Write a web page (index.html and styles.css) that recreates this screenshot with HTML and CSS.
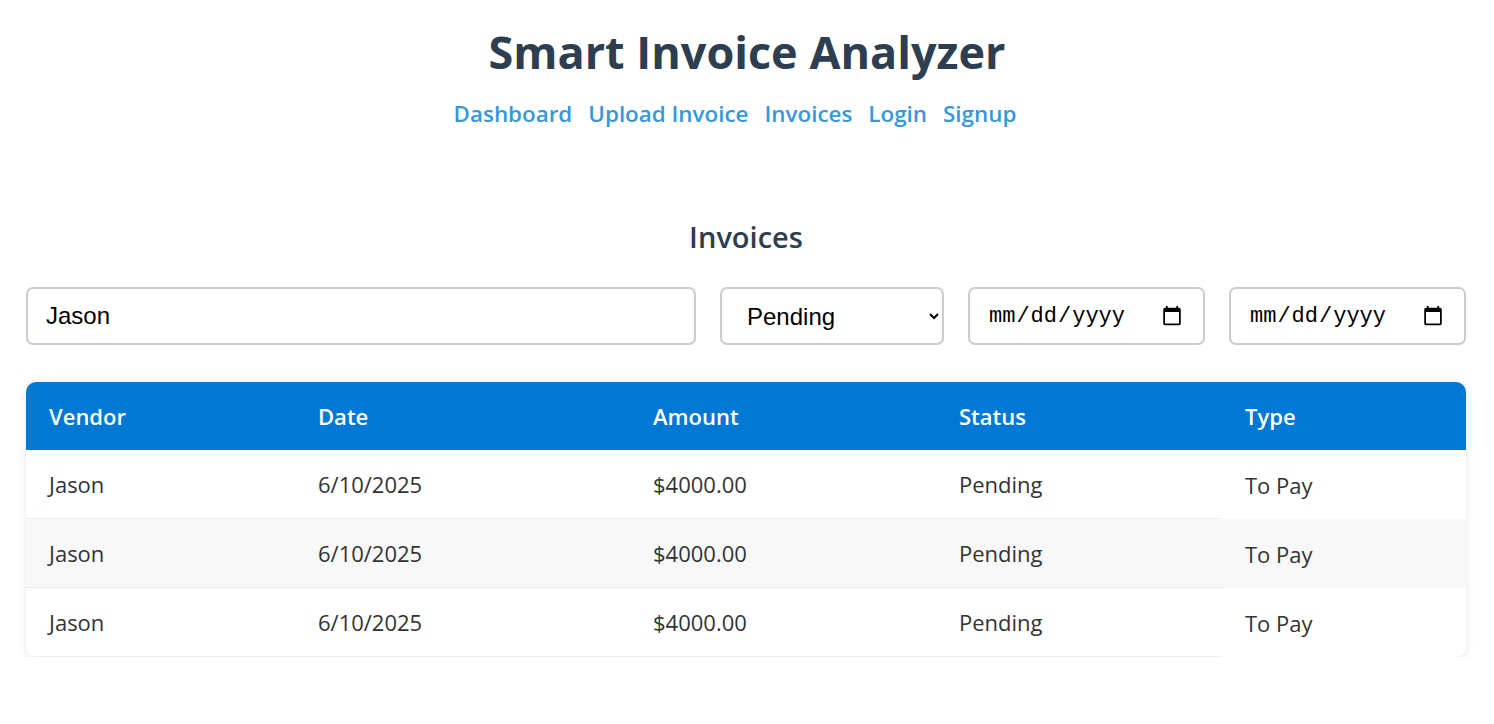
FILE: index.html
```html
<!DOCTYPE html>
<html lang="en">
<head>
<meta charset="utf-8">
<title>Smart Invoice Analyzer</title>
<link rel="stylesheet" href="styles.css">
</head>
<body>
<header class="site-header">
  <h1 class="site-title">Smart Invoice Analyzer</h1>
  <nav class="site-nav">
    <a href="#">Dashboard</a>
    <a href="#">Upload Invoice</a>
    <a href="#">Invoices</a>
    <a href="#">Login</a>
    <a href="#">Signup</a>
  </nav>
</header>
<main class="page">
  <h2 class="page-title">Invoices</h2>
  <div class="filters">
    <input class="field field-search" type="text" value="Jason">
    <select class="field field-select">
      <option>Pending</option>
    </select>
    <input class="field field-date" type="date">
    <input class="field field-date" type="date">
  </div>
  <div class="table-card">
    <table class="invoice-table">
      <thead>
        <tr><th class="c-vendor">Vendor</th><th class="c-date">Date</th><th class="c-amount">Amount</th><th class="c-status">Status</th><th class="c-type">Type</th></tr>
      </thead>
      <tbody>
        <tr><td>Jason</td><td>6/10/2025</td><td>$4000.00</td><td>Pending</td><td class="type">To Pay</td></tr>
        <tr><td>Jason</td><td>6/10/2025</td><td>$4000.00</td><td>Pending</td><td class="type">To Pay</td></tr>
        <tr><td>Jason</td><td>6/10/2025</td><td>$4000.00</td><td>Pending</td><td class="type">To Pay</td></tr>
      </tbody>
    </table>
  </div>
</main>
</body>
</html>
```
FILE: styles.css
```css
* { box-sizing: border-box; }
html, body { margin: 0; padding: 0; background: #fff; }
body {
  font-family: "Open Sans", "Noto Sans", sans-serif;
  color: #333;
}
.site-header {
  text-align: center;
  padding-top: 22px;
}
.site-title {
  margin: 0;
  font-size: 45px;
  line-height: 60px;
  font-weight: 700;
  color: #2c3e50;
}
.site-nav {
  margin-top: 17px;
  display: flex;
  justify-content: center;
  gap: 16px;
  padding-right: 24px;
}
.site-nav a {
  color: #3498db;
  text-decoration: none;
  font-weight: 600;
  font-size: 22.4px;
  line-height: 30px;
}
.page {
  width: 1440px;
  margin: 0 28px 0 26px;
  padding-top: 88px;
}
.page-title {
  margin: 0;
  text-align: center;
  font-size: 29px;
  line-height: 40px;
  font-weight: 600;
  color: #2c3e50;
}
.filters {
  display: flex;
  gap: 24px;
  margin-top: 30px;
}
.field {
  height: 58px;
  border: 2px solid #ccc;
  border-radius: 7px;
  background: #fff;
  font-family: "Liberation Sans", Arial, sans-serif;
  font-size: 24px;
  color: #000;
  padding: 0 18px;
}
.field-search { flex: 1; }
.field-select { width: 224px; padding-left: 21px; padding-right: 13px; }
.field-date {
  width: 237px;
  font-family: "Liberation Mono", monospace;
  font-size: 22px;
}
.table-card {
  margin-top: 37px;
  border-radius: 10px;
  overflow: hidden;
  box-shadow: 0 2px 10px rgba(0,0,0,0.1);
}
.invoice-table {
  width: 100%;
  table-layout: fixed;
  border-collapse: separate;
  border-spacing: 0;
}
.invoice-table th {
  background: #0078d4;
  color: #fff;
  text-align: left;
  font-weight: 600;
  font-size: 22px;
  height: 68px;
  padding: 0 23px;
}
.c-vendor { width: 269px; }
.c-date { width: 335px; }
.c-amount { width: 306px; }
.c-status { width: 286px; }
.c-type { width: 244px; }
.invoice-table td {
  box-sizing: content-box;
  font-size: 22px;
  height: 68px;
  padding: 0 23px;
  border-bottom: 1px solid #eee;
  color: #333;
}
.invoice-table td.type { border-bottom: none; }
.invoice-table tbody tr:nth-child(even) { background: #f8f8f8; }
```
